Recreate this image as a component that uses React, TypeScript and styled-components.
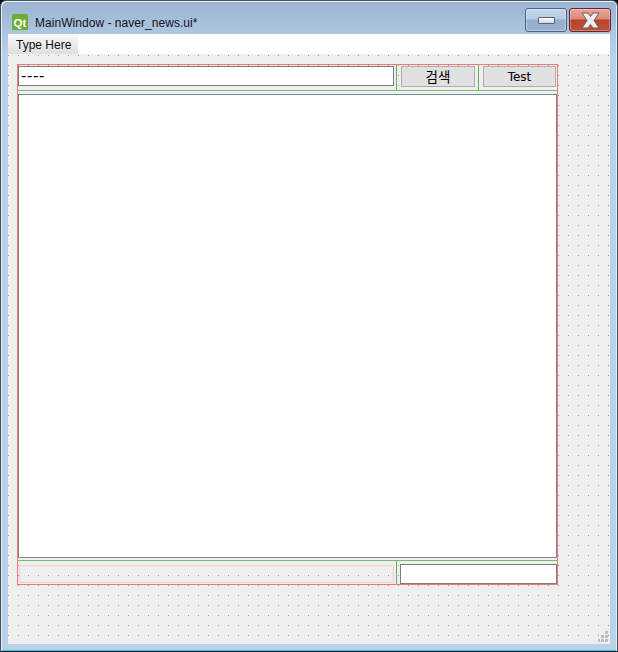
import styled, { createGlobalStyle } from "styled-components";

const GlobalStyle = createGlobalStyle`
  html, body {
    margin: 0;
    padding: 0;
    background: #0b0b0b;
  }
`;

const Window = styled.div`
  box-sizing: border-box;
  width: 618px;
  height: 652px;
  display: flex;
  flex-direction: column;
  background: linear-gradient(#9ab4d1 0, #b9d2ec 54px, #b9d2ec 100%);
  border: 1px solid #4a525a;
  border-bottom-color: #14181c;
  border-radius: 6px 6px 0 0;
  box-shadow: inset 1px 1px 0 #e4edf6, inset -1px 0 0 #e4edf6, inset 0 -1px 0 #3fc3e6;
`;

const TitleBar = styled.div`
  height: 33px;
  display: flex;
  align-items: flex-start;
  padding: 0 6px 0 11px;
`;

const AppIcon = styled.svg`
  width: 16px;
  height: 16px;
  margin-top: 13px;
`;

const Caption = styled.span`
  margin: 14px 0 0 7px;
  font: 12px/16px "Liberation Sans", sans-serif;
  letter-spacing: 0.04px;
  color: #14101c;
  flex: 1;
`;

const CaptionButton = styled.div<{ $close?: boolean }>`
  box-sizing: border-box;
  width: 42px;
  height: 24px;
  margin-top: 7px;
  margin-left: ${(p) => (p.$close ? "2px" : "0")};
  display: flex;
  align-items: center;
  justify-content: center;
  border: 1px solid ${(p) => (p.$close ? "#5c2a34" : "#4f6480")};
  border-radius: 3px;
  background: ${(p) =>
    p.$close
      ? "linear-gradient(#e8a598 0, #d98a78 45%, #b9432a 50%, #c25038 100%)"
      : "linear-gradient(#c6d7ec 0, #b6cae3 45%, #92aecd 50%, #9ab5d3 100%)"};
  box-shadow: inset 0 0 0 1px rgba(255, 255, 255, 0.3);
`;

const MinGlyph = styled.div`
  box-sizing: border-box;
  width: 17px;
  height: 7px;
  background: linear-gradient(#ffffff, #d5d8dc);
  border: 1px solid #55657a;
  border-radius: 1px;
`;

const Client = styled.div`
  flex: 1;
  display: flex;
  flex-direction: column;
  margin: 0 7px 7px 7px;
  min-height: 0;
`;

const MenuBar = styled.div`
  height: 20px;
  background: #ffffff;
  display: flex;
`;

const MenuItem = styled.div`
  width: 70px;
  padding-left: 8px;
  box-sizing: border-box;
  font: 12px/22px "Liberation Sans", sans-serif;
  color: #111111;
  background: linear-gradient(#f8f8f8, #dfdfdf);
`;

const FormCanvas = styled.div`
  position: relative;
  flex: 1;
  box-sizing: border-box;
  padding: 10px 0 0 9px;
  background-color: #efefef;
  background-image: conic-gradient(at 1px 1px, transparent 75%, #9c9c9c 0);
  background-size: 10px 10px;
  background-position: 0 1px;
`;

const RedLayout = styled.div`
  box-sizing: border-box;
  width: 541px;
  height: 521px;
  display: flex;
  flex-direction: column;
  border: 1px solid #f07878;
`;

const TopRow = styled.div`
  height: 26px;
  box-sizing: border-box;
  display: grid;
  grid-template-columns: 378px 82px 79px;
  border-bottom: 1px solid #74b974;
`;

const BottomRow = styled.div`
  flex: 1;
  display: grid;
  grid-template-columns: 378px 161px;
  border-top: 1px solid #74b974;
`;

const Cell = styled.div<{ $divider?: boolean; $pad?: string }>`
  box-sizing: border-box;
  min-width: 0;
  padding: ${(p) => p.$pad ?? "0"};
  border-left: ${(p) => (p.$divider ? "1px solid #5fb05f" : "none")};
`;

const LineEdit = styled.div`
  box-sizing: border-box;
  height: 20px;
  overflow: hidden;
  background: #ffffff;
  border: 1px solid #7d7d7d;
  padding-left: 2px;
  font: 16px/18px "Liberation Sans", sans-serif;
  letter-spacing: 0.7px;
  color: #000000;
`;

const PushButton = styled.div<{ $size?: number }>`
  box-sizing: border-box;
  height: 21px;
  background: #e1e1e1;
  border: 1px solid #adadad;
  text-align: center;
  font: ${(p) => p.$size ?? 12}px/20px "DejaVu Sans", "Noto Sans CJK KR", sans-serif;
  color: #000000;
`;

const TextBrowser = styled.div`
  box-sizing: border-box;
  height: 464px;
  margin: 3px 0 2px;
  background: #ffffff;
  border: 1px solid #7d8590;
`;

const LabelSlot = styled.div`
  box-sizing: border-box;
  height: 18px;
  margin: 4px 0 0 1px;
  width: 375px;
  border: 1px solid #f6cccc;
`;

const Grip = styled.svg`
  position: absolute;
  right: 2px;
  bottom: 2px;
  width: 11px;
  height: 11px;
`;

const App = () => {
  return (
    <>
      <GlobalStyle />
      <Window>
        <TitleBar>
          <AppIcon viewBox="0 0 16 16">
            <rect width="16" height="16" rx="1.5" fill="#6aae35" />
            <text x="1.5" y="12.5" fontFamily="Liberation Sans" fontSize="11.5" fontWeight="bold" fill="#fff">
              Qt
            </text>
          </AppIcon>
          <Caption>MainWindow - naver_news.ui*</Caption>
          <CaptionButton>
            <MinGlyph />
          </CaptionButton>
          <CaptionButton $close>
            <svg width="19" height="17" viewBox="0 0 19 17">
              <path
                d="M1 1h6l2.5 3.5L12 1h6l-5 7.5 5 7.5h-6l-2.5-3.5L7 16H1l5-7.5z"
                fill="#eceef0"
                stroke="#7a5a5a"
                strokeWidth="1"
              />
            </svg>
          </CaptionButton>
        </TitleBar>
        <Client>
          <MenuBar>
            <MenuItem>Type Here</MenuItem>
          </MenuBar>
          <FormCanvas>
            <RedLayout>
              <TopRow>
                <Cell $pad="1px 2px 0 0">
                  <LineEdit>----</LineEdit>
                </Cell>
                <Cell $divider $pad="1px 3px 0 4px">
                  <PushButton $size={13.5}>검색</PushButton>
                </Cell>
                <Cell $divider $pad="1px 1px 0 4px">
                  <PushButton>Test</PushButton>
                </Cell>
              </TopRow>
              <TextBrowser />
              <BottomRow>
                <Cell>
                  <LabelSlot />
                </Cell>
                <Cell $divider $pad="3px 0 0 3px">
                  <LineEdit />
                </Cell>
              </BottomRow>
            </RedLayout>
            <Grip viewBox="0 0 11 11">
              <g fill="#bdbdbd">
                <rect x="8" y="0" width="3" height="3" />
                <rect x="4" y="4" width="3" height="3" />
                <rect x="8" y="4" width="3" height="3" />
                <rect x="1" y="8" width="2" height="3" />
                <rect x="4" y="8" width="3" height="3" />
                <rect x="8" y="8" width="3" height="3" />
              </g>
            </Grip>
          </FormCanvas>
        </Client>
      </Window>
    </>
  );
};

export default App;
